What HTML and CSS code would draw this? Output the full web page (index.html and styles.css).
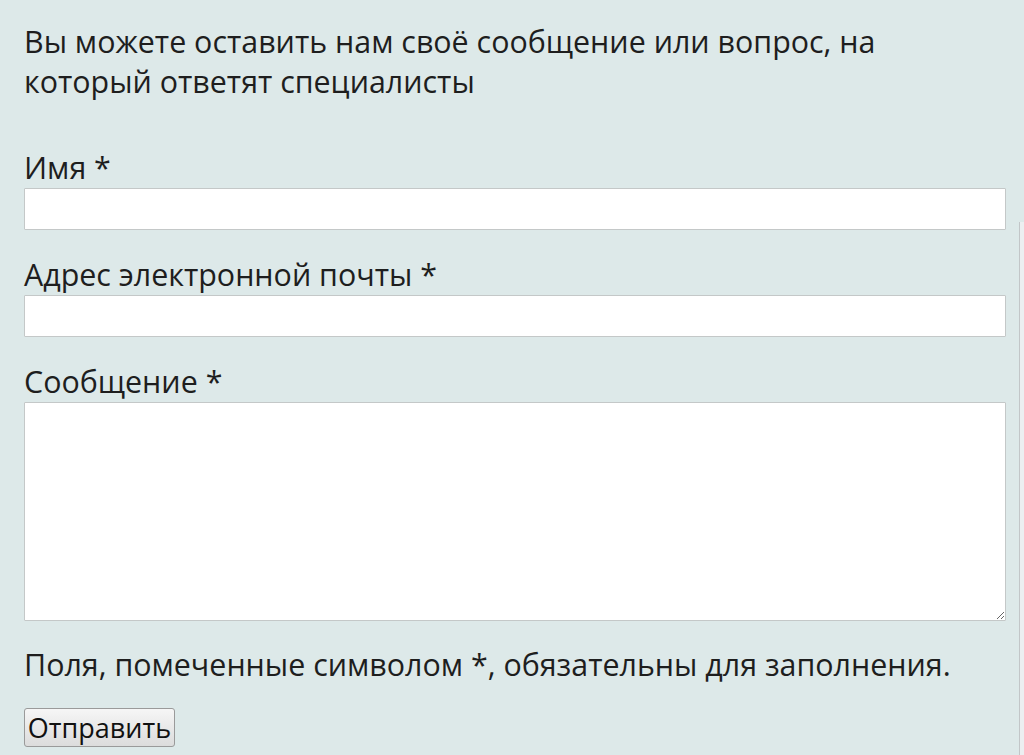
FILE: index.html
```html
<!DOCTYPE html>
<html lang="ru">
<head>
    <meta charset="UTF-8">
    <meta name="viewport" content="width=device-width, initial-scale=1.0">
    <title>Обратная связь</title>
    <link rel="stylesheet" href="styles.css">
</head>
<body>
    <div class="forma">
        <p class="intro">Вы можете оставить нам своё сообщение или вопрос, на который ответят специалисты</p>
        <form class="campos" onsubmit="return false">
            <label class="etiqueta" for="nombre">Имя *</label>
            <input type="text" class="entrada" id="nombre">

            <label class="etiqueta" for="correo">Адрес электронной почты *</label>
            <input type="email" class="entrada" id="correo">

            <label class="etiqueta" for="mensaje">Сообщение *</label>
            <textarea class="entrada mensaje" id="mensaje"></textarea>

            <p class="nota">Поля, помеченные символом *, обязательны для заполнения.</p>
            <button type="submit" class="boton">Отправить</button>
        </form>
    </div>
    <div class="borde"></div>
</body>
</html>
```

FILE: styles.css
```css
body {
    margin: 0;
    font-family: "Open Sans", "Noto Sans", sans-serif;
    font-size: 30.4px;
    line-height: 40px;
    color: #1e1e1e;
    background-color: #dde9e9;
    overflow: hidden;
}
.forma {
    width: 982px;
    padding: 22px 0 0 24px;
}
.intro {
    margin: 0 0 46px 0;
}
.campos {
    display: flex;
    flex-direction: column;
}
.etiqueta {
    display: block;
}
.entrada {
    box-sizing: border-box;
    width: 100%;
    height: 42px;
    margin: 0 0 25px 0;
    border: 1px solid #c4c8c8;
    border-radius: 1px;
    background-color: #fff;
    font-family: inherit;
    font-size: 20px;
}
.mensaje {
    height: 219px;
    margin-bottom: 24px;
}
.nota {
    margin: 0 0 23px 0;
}
.boton {
    align-self: flex-start;
    width: 151px;
    height: 39px;
    padding: 0;
    font-family: "Open Sans", "Noto Sans", sans-serif;
    font-size: 27px;
    line-height: 36px;
    color: #111;
    background: linear-gradient(#f6f6f6, #dcdcdc);
    border: 1px solid #9a9a9a;
    border-radius: 3px;
}
.borde {
    position: absolute;
    top: 222px;
    left: 1019px;
    width: 5px;
    height: 533px;
    background-color: #eceff1;
    border-left: 1px solid #c2c6c8;
}
```
